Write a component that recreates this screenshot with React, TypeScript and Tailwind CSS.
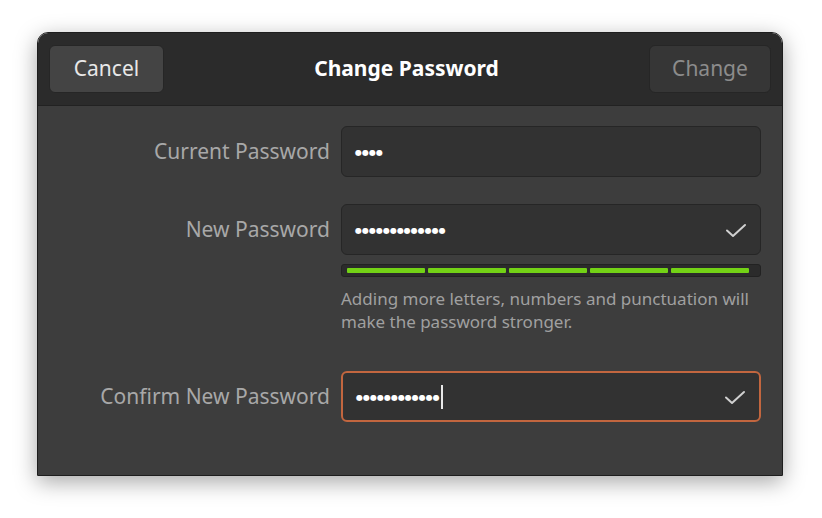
import React from 'react';

const font = { fontFamily: '"Noto Sans", "DejaVu Sans", sans-serif' };

const Check = () => (
  <svg width="24" height="24" viewBox="0 0 24 24" className="shrink-0">
    <path d="M3 12.5 L9 18 L21 7" fill="none" stroke="#d0d0d0" strokeWidth="2" strokeLinecap="round" strokeLinejoin="round" />
  </svg>
);

const Dots = ({ count }: { count: number }) => (
  <span className="text-white text-[8px] tracking-[0px] leading-none">{'●'.repeat(count)}</span>
);

const PasswordField = ({ count, valid, focused }: { count: number; valid?: boolean; focused?: boolean }) => (
  <div
    className={`h-[51px] flex items-center justify-between pl-[13px] pr-[12px] rounded-[6px] bg-[#323232] ${
      focused ? 'border-2 border-[#c2663f]' : 'border border-[#262626]'
    }`}
  >
    <div className="flex items-center">
      <Dots count={count} />
      {focused && <span className="ml-[1px] w-[2px] h-[24px] bg-[#e8e8e8]" />}
    </div>
    {valid && <Check />}
  </div>
);

export default function App() {
  return (
    <div className="w-[822px] h-[518px] bg-white pt-[32px] pl-[37px]" style={font}>
      <div className="w-[746px] h-[444px] flex flex-col rounded-t-[11px] overflow-hidden shadow-[0_6px_22px_rgba(0,0,0,0.35)] border border-[#1e1e1e]">
        <div className="h-[73px] shrink-0 bg-[#2b2b2b] flex items-center justify-between px-[11px] border-b border-[#222]">
          <button className="w-[115px] h-[48px] rounded-[6px] bg-[#444444] border border-[#262626] text-[#e8e8e8] text-[21px]">
            Cancel
          </button>
          <div className="text-white text-[21px] font-bold">Change Password</div>
          <button className="w-[122px] h-[48px] rounded-[6px] bg-[#363636] border border-[#262626] text-[#8c8c8c] text-[21px]">
            Change
          </button>
        </div>
        <div className="flex-1 bg-[#3d3d3d] pt-[20px]">
          <div className="grid grid-cols-[292px_420px] gap-x-[11px] items-center">
            <div className="text-right text-[#a8a8a8] text-[21px]">Current Password</div>
            <PasswordField count={4} />

            <div className="h-[27px] col-span-2" />

            <div className="text-right text-[#a8a8a8] text-[21px]">New Password</div>
            <PasswordField count={13} valid />

            <div />
            <div className="mt-[9px] h-[13px] rounded-[3px] bg-[#2b2b2b] border border-[#222] flex items-center gap-[3px] pl-[5px] pr-[11px]">
              {[0, 1, 2, 3, 4].map((i) => (
                <div key={i} className="flex-1 h-[5px] bg-[#73d216] rounded-[1px]" />
              ))}
            </div>

            <div />
            <div className="mt-[10px] text-[17px] leading-[23px] text-[#a0a0a0]">
              Adding more letters, numbers and punctuation will make the password stronger.
            </div>

            <div className="h-[38px] col-span-2" />

            <div className="text-right text-[#a8a8a8] text-[21px]">Confirm New Password</div>
            <PasswordField count={12} valid focused />
          </div>
        </div>
      </div>
    </div>
  );
}
